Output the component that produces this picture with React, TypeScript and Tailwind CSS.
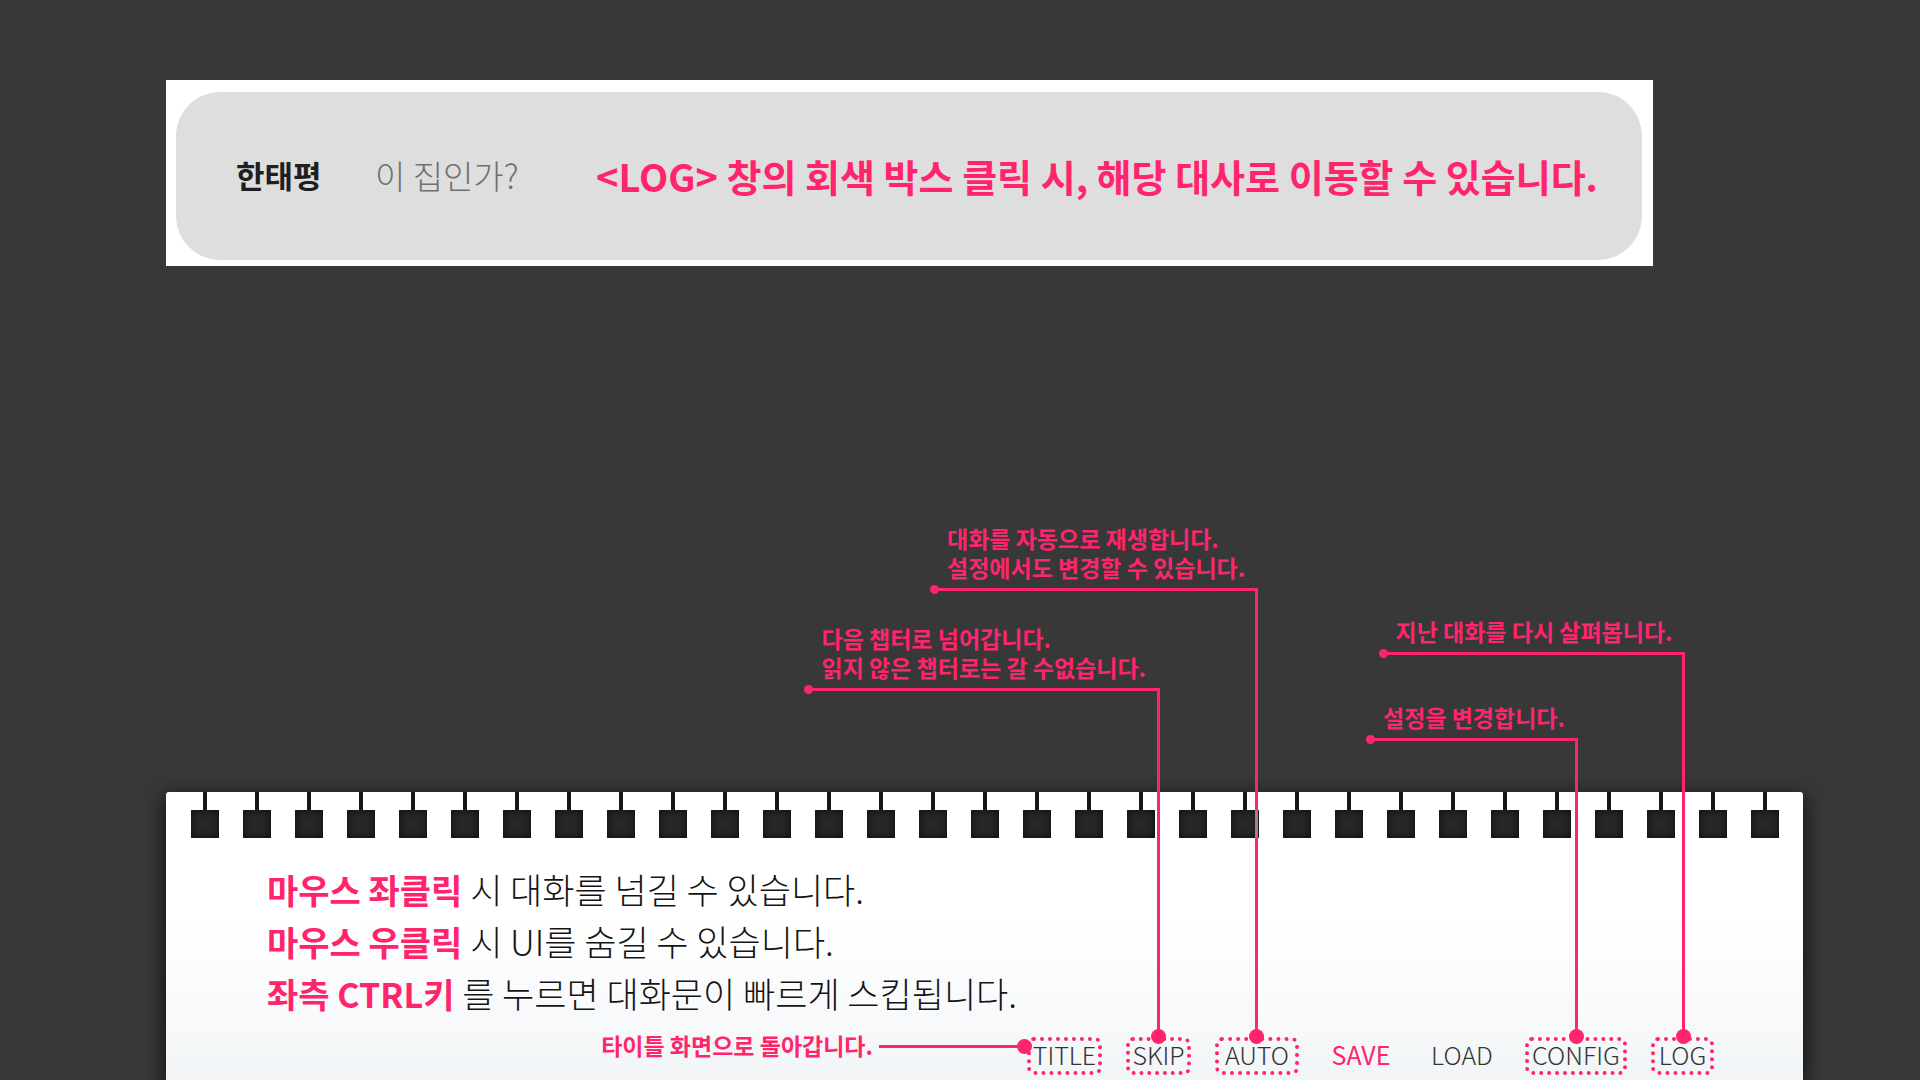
import React from "react";

type Callout = {
  lines: string[];
  size: string;
  height: string;
  indent: string;
  overHole?: boolean;
};

type MenuItem = {
  label: string;
  width: string;
  boxed: boolean;
  active?: boolean;
  callout?: Callout;
};

const menu: MenuItem[] = [
  { label: "TITLE", width: "w-[75px]", boxed: true },
  {
    label: "SKIP",
    width: "w-[65px]",
    boxed: true,
    callout: {
      lines: ["다음 챕터로 넘어갑니다.", "읽지 않은 챕터로는 갈 수없습니다."],
      size: "w-[352px] -mr-px",
      height: "h-[349px]",
      indent: "pl-[14px]",
    },
  },
  {
    label: "AUTO",
    width: "w-[84px]",
    boxed: true,
    callout: {
      lines: ["대화를 자동으로 재생합니다.", "설정에서도 변경할 수 있습니다."],
      size: "w-[324px] -mr-px",
      height: "h-[449px]",
      indent: "pl-[13px]",
      overHole: true,
    },
  },
  { label: "SAVE", width: "w-[76px]", boxed: false, active: true },
  { label: "LOAD", width: "w-[78px]", boxed: false },
  {
    label: "CONFIG",
    width: "w-[102px]",
    boxed: true,
    callout: {
      lines: ["설정을 변경합니다."],
      size: "w-[208px] -mr-0.5",
      height: "h-[299px]",
      indent: "pl-[13px]",
    },
  },
  {
    label: "LOG",
    width: "w-[63px]",
    boxed: true,
    callout: {
      lines: ["지난 대화를 다시 살펴봅니다."],
      size: "w-[302px] -mr-0.5",
      height: "h-[385px]",
      indent: "pl-[13px]",
    },
  },
];

const tips = [
  { key: "마우스 좌클릭", text: "시 대화를 넘길 수 있습니다." },
  { key: "마우스 우클릭", text: "시 UI를 숨길 수 있습니다." },
  { key: "좌측 CTRL키", text: "를 누르면 대화문이 빠르게 스킵됩니다." },
];

function CalloutLine({ callout }: { callout: Callout }) {
  return (
    <div className={`pointer-events-none absolute right-1/2 bottom-full flex flex-col ${callout.size}`}>
      <p className={`text-[23px] leading-[29px] font-bold whitespace-nowrap ${callout.indent}`}>
        {callout.lines.map((line) => (
          <span key={line} className="block">
            {line}
          </span>
        ))}
      </p>
      <div className={`relative mt-1.5 border-t-3 border-r-3 border-[#ff246c] ${callout.height}`}>
        <span className="absolute -top-1.5 -left-1 size-[9px] rounded-full bg-[#ff246c]" />
        <span className="absolute -right-[9px] -bottom-[7px] size-[15px] rounded-full bg-[#ff246c]" />
        {callout.overHole && (
          <span className="absolute top-[219px] -right-[3px] h-7 w-[3px] bg-[#b5778c]" />
        )}
      </div>
    </div>
  );
}

function SpiralHoles() {
  return (
    <div className="flex justify-between pr-6 pl-[25px]" aria-hidden="true">
      {Array.from({ length: 31 }, (_, i) => (
        <div key={i} className="flex flex-col items-center">
          <span className="h-[18px] w-1 bg-[#161616]" />
          <span className="size-7 bg-[#272727] shadow-[inset_0_0_8px_#0a0c0c]" />
        </div>
      ))}
    </div>
  );
}

export default function App() {
  return (
    <main className="flex min-h-screen flex-col overflow-hidden bg-[#383838] pt-20 font-['Noto_Sans_CJK_KR',sans-serif] text-[#ff246c]">
      <section className="mr-[267px] ml-[166px] bg-white pt-3 pr-[11px] pb-1.5 pl-2.5">
        <button
          type="button"
          className="flex h-[168px] w-full items-center rounded-[44px] bg-[#dedede] pb-0.5 pl-[60px] text-left whitespace-nowrap"
        >
          <span className="w-[139px] text-[31px] leading-10 font-bold text-[#1f1f1f]">한태평</span>
          <span className="w-[221px] text-[33px] leading-10 font-light text-[#707070]">이 집인가?</span>
          <span className="pt-0.5 text-[38px] leading-[48px] font-bold">
            &lt;LOG&gt; 창의 회색 박스 클릭 시, 해당 대사로 이동할 수 있습니다.
          </span>
        </button>
      </section>

      <section className="mt-auto mr-[117px] ml-[166px] flex h-72 flex-col rounded-t-[3px] bg-linear-to-b from-white from-45% to-[#f2f5f7] shadow-[0_6px_20px_2px_rgba(0,0,0,0.7)]">
        <SpiralHoles />
        <div className="mt-[25px] pl-[101px] text-[35px] leading-[52px]">
          {tips.map((tip) => (
            <p key={tip.key} className="font-light text-[#141414]">
              <strong className="text-[34px] leading-none font-bold text-[#ff246c]">{tip.key}</strong> {tip.text}
            </p>
          ))}
        </div>
        <nav className="mt-auto mb-[5px] pr-[89px]">
          <ul className="flex justify-end gap-6">
            {menu.map((item) => (
              <li key={item.label} className={`relative h-[38px] ${item.width}`}>
                <button
                  type="button"
                  className={`flex size-full items-center justify-center rounded-[7px] pb-1 text-[25px] leading-none ${
                    item.boxed ? "border-4 border-dotted border-[#ff246c]" : ""
                  } ${item.active ? "font-normal text-[#ff246c]" : "font-light text-[#333333]"}`}
                >
                  {item.label}
                </button>
                {item.callout && <CalloutLine callout={item.callout} />}
                {item.label === "TITLE" && (
                  <div className="pointer-events-none absolute -top-1.5 right-full -mr-[5px] flex items-center whitespace-nowrap">
                    <p className="pb-0.5 text-[23px] leading-[29px] font-bold">타이틀 화면으로 돌아갑니다.</p>
                    <span className="ml-1.5 h-[3px] w-[140px] bg-[#ff246c]" />
                    <span className="-ml-0.5 size-[15px] rounded-full bg-[#ff246c]" />
                  </div>
                )}
              </li>
            ))}
          </ul>
        </nav>
      </section>
    </main>
  );
}
